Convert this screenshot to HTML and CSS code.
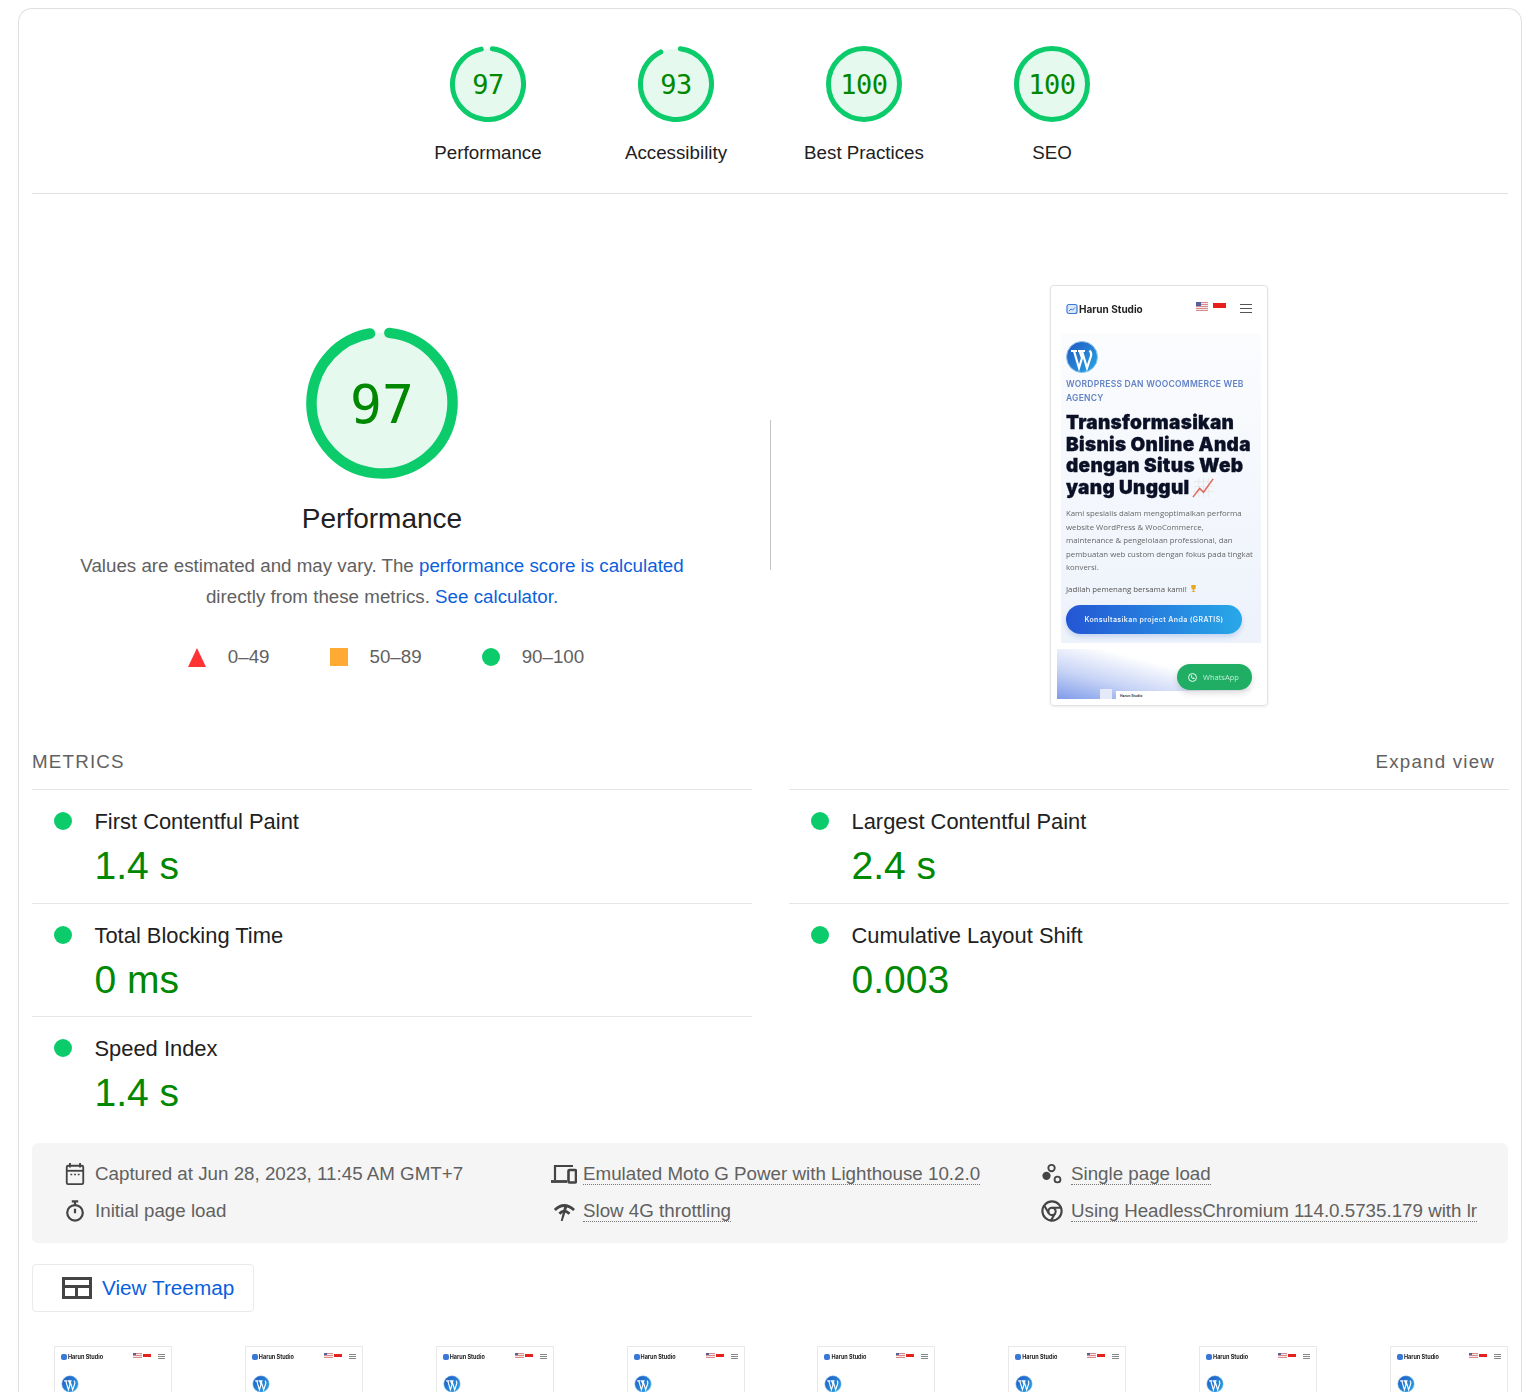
FILE: index.html
```html
<!DOCTYPE html>
<html lang="en">
<head>
  <meta charset="UTF-8" />
  <meta name="viewport" content="width=device-width, initial-scale=1.0"/>
  <title>PageSpeed Report</title>
  <link rel="stylesheet" href="styles.css">
</head>
<body>

<div class="report">

  <!-- Score gauges -->
  <div class="gauges">
    <div class="gauge">
      <div class="ring">
        <svg viewBox="0 0 76 76"><circle class="ring-bg" cx="38" cy="38" r="35.5"/><circle class="ring-arc" cx="38" cy="38" r="35.5" pathLength="100" stroke-dasharray="95 5" transform="rotate(-83 38 38)"/></svg>
        <span>97</span>
      </div>
      <div class="gauge-label">Performance</div>
    </div>
    <div class="gauge">
      <div class="ring">
        <svg viewBox="0 0 76 76"><circle class="ring-bg" cx="38" cy="38" r="35.5"/><circle class="ring-arc" cx="38" cy="38" r="35.5" pathLength="100" stroke-dasharray="91 9" transform="rotate(-83 38 38)"/></svg>
        <span>93</span>
      </div>
      <div class="gauge-label">Accessibility</div>
    </div>
    <div class="gauge">
      <div class="ring">
        <svg viewBox="0 0 76 76"><circle class="ring-bg" cx="38" cy="38" r="35.5"/><circle class="ring-arc" cx="38" cy="38" r="35.5"/></svg>
        <span>100</span>
      </div>
      <div class="gauge-label">Best Practices</div>
    </div>
    <div class="gauge">
      <div class="ring">
        <svg viewBox="0 0 76 76"><circle class="ring-bg" cx="38" cy="38" r="35.5"/><circle class="ring-arc" cx="38" cy="38" r="35.5"/></svg>
        <span>100</span>
      </div>
      <div class="gauge-label">SEO</div>
    </div>
  </div>

  <!-- Performance summary -->
  <div class="summary">
    <div class="summary-left">
      <div class="big-ring">
        <svg viewBox="0 0 152 152"><circle class="big-bg" cx="76" cy="76" r="70.5"/><circle class="big-arc" cx="76" cy="76" r="70.5" pathLength="100" stroke-dasharray="95.6 4.4" transform="rotate(-84 76 76)"/></svg>
        <span>97</span>
      </div>
      <h2>Performance</h2>
      <p class="note">Values are estimated and may vary. The <a href="#">performance score is calculated</a> directly from these metrics. <a href="#">See calculator.</a></p>
      <div class="legend">
        <div class="legend-item"><i class="tri"></i>0–49</div>
        <div class="legend-item"><i class="sq"></i>50–89</div>
        <div class="legend-item"><i class="dot"></i>90–100</div>
      </div>
    </div>
    <div class="divider"></div>
    <div class="summary-right">
      <div class="shot">
        <div class="site-head">
          <svg class="site-logo" viewBox="0 0 12 12"><rect x="1" y="1.5" width="10" height="9" rx="2" fill="#dbe8fb" stroke="#3a78d8" stroke-width="1.2"/><path d="M3 8 5 6l1.5 1L9 4.5" fill="none" stroke="#3a78d8" stroke-width="1"/></svg>
          <b>Harun Studio</b>
          <i class="flag-us"></i>
          <i class="flag-id"></i>
          <i class="burger"></i>
        </div>
        <div class="hero">
          <svg class="wp" viewBox="0 0 34 34"><defs><linearGradient id="wpfill" x1="0" y1="0" x2="1" y2="1"><stop offset="0" stop-color="#1f55c0"/><stop offset="1" stop-color="#2aa8e6"/></linearGradient><symbol id="wpmark" viewBox="0 0 34 34"><circle cx="17" cy="17" r="15.5" fill="url(#wpfill)" stroke="#8cc4ea" stroke-width="1"/><path d="M6 11h6M9 11l5 17 3-10-2.500-7M13 11h7M17 11l5 17 4-12c.8-2.500 0-4-1.500-5.500" fill="none" stroke="#fff" stroke-width="2.200"/></symbol></defs><use href="#wpmark"/></svg>
          <div class="eyebrow">WORDPRESS DAN WOOCOMMERCE WEB AGENCY</div>
          <h1>Transformasikan Bisnis Online Anda dengan Situs Web yang Unggul <svg class="chart" viewBox="0 0 24 24"><path d="M2 6h20M2 11h20M2 16h20M7 2v20M12 2v20M17 2v20" stroke="#e3e3e3" stroke-width=".8" fill="none"/><path d="M1 22 8 13l4 4L22 3" stroke="#e0685c" stroke-width="1.500" fill="none"/></svg></h1>
          <p class="hero-text">Kami spesialis dalam mengoptimalkan performa<br>website WordPress &amp; WooCommerce,<br>maintenance &amp; pengelolaan professional, dan<br>pembuatan web custom dengan fokus pada tingkat<br>konversi.</p>
          <p class="hero-win">Jadilah pemenang bersama kami! <svg class="cup" viewBox="0 0 10 10"><path d="M2.500 1h5v3a2.500 2.500 0 0 1-5 0zM4.400 6h1.200v2H7v1H3V8h1.400z" fill="#e8a91f"/></svg></p>
          <div class="hero-btn">Konsultasikan project Anda (GRATIS)</div>
        </div>
        <div class="fold">
          <div class="fold-icon"></div>
          <div class="fold-card"><span>Harun Studio</span></div>
        </div>
        <div class="whatsapp">
          <svg viewBox="0 0 12 12"><circle cx="6" cy="6" r="4.300" fill="none" stroke="#fff" stroke-width="1"/><path d="M4.300 3.800c-.5 2 1.600 4.200 3.700 3.800l.2-1-1.200-.5-.5.500c-.6-.3-1-.8-1.200-1.300l.5-.5-.5-1.200z" fill="#fff"/></svg>
          WhatsApp
        </div>
      </div>
    </div>
  </div>

  <!-- Metrics -->
  <div class="metrics-head">
    <span>METRICS</span>
    <span class="expand">Expand view</span>
  </div>
  <div class="metrics">
    <div class="metric"><i class="dot"></i><div><div class="metric-name">First Contentful Paint</div><div class="metric-value">1.4 s</div></div></div>
    <div class="metric"><i class="dot"></i><div><div class="metric-name">Largest Contentful Paint</div><div class="metric-value">2.4 s</div></div></div>
    <div class="metric"><i class="dot"></i><div><div class="metric-name">Total Blocking Time</div><div class="metric-value">0 ms</div></div></div>
    <div class="metric"><i class="dot"></i><div><div class="metric-name">Cumulative Layout Shift</div><div class="metric-value">0.003</div></div></div>
    <div class="metric"><i class="dot"></i><div><div class="metric-name">Speed Index</div><div class="metric-value">1.4 s</div></div></div>
  </div>

  <!-- Run info -->
  <div class="env">
    <div class="env-item">
      <svg viewBox="0 0 24 24"><path d="M6.500 0v5M17.500 0v5" stroke="#444" stroke-width="2"/><rect x="3" y="3" width="18" height="20" rx="1.500" fill="none" stroke="#444" stroke-width="2"/><path d="M3 8.500h18" stroke="#444" stroke-width="2"/><path d="M7 12.500h2M11 12.500h2M15 12.500h2" stroke="#444" stroke-width="1.500"/></svg>
      <span>Captured at Jun 28, 2023, 11:45 AM GMT+7</span>
    </div>
    <div class="env-item env-wide">
      <svg viewBox="0 0 26 22"><path d="M4 17V3h18" fill="none" stroke="#444" stroke-width="2.200"/><path d="M0 18.500h16" stroke="#444" stroke-width="2.800"/><rect x="17.500" y="7" width="7.500" height="12.500" rx="1" fill="none" stroke="#444" stroke-width="2.600"/></svg>
      <span class="dotted">Emulated Moto G Power with Lighthouse 10.2.0</span>
    </div>
    <div class="env-item env-last">
      <svg viewBox="0 0 24 24"><circle cx="11.500" cy="5.500" r="3.500" fill="none" stroke="#444" stroke-width="2"/><circle cx="6" cy="14" r="4.500" fill="#444"/><circle cx="18" cy="18" r="3.200" fill="none" stroke="#444" stroke-width="2"/></svg>
      <span class="dotted">Single page load</span>
    </div>
    <div class="env-item">
      <svg viewBox="0 0 24 24"><circle cx="12" cy="14" r="8.500" fill="none" stroke="#444" stroke-width="2.400"/><path d="M8.500 1.500h7M12 1.500v4M12 9.500v5" stroke="#444" stroke-width="2.400"/></svg>
      <span>Initial page load</span>
    </div>
    <div class="env-item env-wide">
      <svg viewBox="0 0 26 24"><path d="M3 11Q13 1 24 11M8 15Q13 9 19 15" fill="none" stroke="#444" stroke-width="3"/><path d="M13.500 6h3.500L11.500 23H9.500z" fill="#444"/></svg>
      <span class="dotted">Slow 4G throttling</span>
    </div>
    <div class="env-item env-last">
      <svg viewBox="0 0 24 24"><circle cx="12" cy="12" r="10.500" fill="none" stroke="#444" stroke-width="2.300"/><circle cx="12" cy="12.500" r="4" fill="none" stroke="#444" stroke-width="2.300"/><path d="M12 8.500h10M8.500 14.500 3.500 6M15.500 14.500l-5 8.500" stroke="#444" stroke-width="2.300" fill="none"/></svg>
      <span class="dotted">Using HeadlessChromium 114.0.5735.179 with lr</span>
    </div>
  </div>

  <a class="treemap" href="#">
    <svg viewBox="0 0 30 22"><path d="M0 0h30v22H0zM3 3v5h24V3zM3 11v8h10v-8zM16 11v8h11v-8z" fill="#444" fill-rule="evenodd"/></svg>
    View Treemap
  </a>

  <!-- Filmstrip -->
  <div class="strip">
    <div class="thumb"><div class="thumb-head"><i class="thumb-logo"></i><b>Harun Studio</b><i class="flag-us"></i><i class="flag-id"></i><i class="burger"></i></div><svg class="thumb-wp"><use href="#wpmark"/></svg></div>
    <div class="thumb"><div class="thumb-head"><i class="thumb-logo"></i><b>Harun Studio</b><i class="flag-us"></i><i class="flag-id"></i><i class="burger"></i></div><svg class="thumb-wp"><use href="#wpmark"/></svg></div>
    <div class="thumb"><div class="thumb-head"><i class="thumb-logo"></i><b>Harun Studio</b><i class="flag-us"></i><i class="flag-id"></i><i class="burger"></i></div><svg class="thumb-wp"><use href="#wpmark"/></svg></div>
    <div class="thumb"><div class="thumb-head"><i class="thumb-logo"></i><b>Harun Studio</b><i class="flag-us"></i><i class="flag-id"></i><i class="burger"></i></div><svg class="thumb-wp"><use href="#wpmark"/></svg></div>
    <div class="thumb"><div class="thumb-head"><i class="thumb-logo"></i><b>Harun Studio</b><i class="flag-us"></i><i class="flag-id"></i><i class="burger"></i></div><svg class="thumb-wp"><use href="#wpmark"/></svg></div>
    <div class="thumb"><div class="thumb-head"><i class="thumb-logo"></i><b>Harun Studio</b><i class="flag-us"></i><i class="flag-id"></i><i class="burger"></i></div><svg class="thumb-wp"><use href="#wpmark"/></svg></div>
    <div class="thumb"><div class="thumb-head"><i class="thumb-logo"></i><b>Harun Studio</b><i class="flag-us"></i><i class="flag-id"></i><i class="burger"></i></div><svg class="thumb-wp"><use href="#wpmark"/></svg></div>
    <div class="thumb"><div class="thumb-head"><i class="thumb-logo"></i><b>Harun Studio</b><i class="flag-us"></i><i class="flag-id"></i><i class="burger"></i></div><svg class="thumb-wp"><use href="#wpmark"/></svg></div>
  </div>

</div>

</body>
</html>
```

FILE: styles.css
```css
html, body { height: 1392px; overflow: hidden; }
body { margin: 0; background: #fff; font-family: "Liberation Sans", Arial, sans-serif; color: #212121; }
a { color: #0b5fdc; text-decoration: none; }

.report { margin: 8px 8px 0 18px; border: 1px solid #e0e0e0; border-bottom: none; border-radius: 14px 14px 0 0; padding: 0 13px; height: 1384px; box-sizing: border-box; }

/* gauges */
.gauges { display: flex; justify-content: center; padding-top: 37px; height: 185px; box-sizing: border-box; border-bottom: 1px solid #e0e0e0; }
.gauge { width: 188px; display: flex; flex-direction: column; align-items: center; }
.ring { position: relative; width: 76px; height: 76px; }
.ring svg { display: block; width: 76px; height: 76px; }
.ring span { position: absolute; inset: 0; display: flex; align-items: center; justify-content: center; font-family: "DejaVu Sans Mono", monospace; font-size: 27px; letter-spacing: -.5px; color: #008800; }
.ring-bg { fill: #e5f9ef; stroke: none; }
.ring-arc { fill: none; stroke: #0ccb6b; stroke-width: 5; stroke-linecap: round; }
.gauge-label { margin-top: 20px; font-size: 18.75px; line-height: 22px; white-space: nowrap; }

/* summary */
.summary { display: flex; height: 546px; }
.summary-left { width: 700px; margin-right: 38px; padding-top: 133px; display: flex; flex-direction: column; align-items: center; }
.big-ring { position: relative; width: 152px; height: 152px; }
.big-ring svg { display: block; width: 152px; height: 152px; }
.big-ring span { position: absolute; inset: 3px 0 0; display: flex; align-items: center; justify-content: center; font-family: "DejaVu Sans Mono", monospace; font-size: 53px; color: #008800; }
.big-bg { fill: #e5f9ef; stroke: none; }
.big-arc { fill: none; stroke: #0ccb6b; stroke-width: 10.5; stroke-linecap: round; }
.summary-left h2 { margin: 22px 0 0; font-size: 28px; line-height: 36px; font-weight: 400; }
.note { margin: 13px 0 0; width: 640px; text-align: center; font-size: 18.75px; line-height: 31px; color: #616161; }
.legend { margin-top: 34px; padding-left: 8px; display: flex; gap: 60px; font-size: 18.75px; line-height: 22px; color: #616161; }
.legend-item { display: flex; align-items: center; gap: 22px; }
.tri { width: 0; height: 0; border-left: 9.5px solid transparent; border-right: 9.5px solid transparent; border-bottom: 19px solid #ff3333; }
.sq { width: 18px; height: 18px; background: #ffaa33; }
.dot { display: block; flex: none; width: 18px; height: 18px; border-radius: 50%; background: #0ccb6b; }
.divider { width: 1px; height: 150px; margin-top: 226px; background: #c4c4c4; }

/* page screenshot */
.summary-right { flex: 1; padding: 91px 0 0 279px; }
.shot { position: relative; width: 218px; height: 421px; box-sizing: border-box; border: 1px solid #e2e2e2; border-radius: 4px; box-shadow: 0 1px 3px rgba(0,0,0,.08); overflow: hidden; filter: blur(.3px); font-family: "Open Sans", sans-serif; }
.site-head { display: flex; align-items: center; height: 48px; padding: 0 15px 2px; box-sizing: border-box; font-family: Inter, sans-serif; font-size: 10px; color: #222; }
.site-logo { width: 12px; height: 12px; margin-right: 1px; }
.site-head b { font-weight: 700; flex: 1; }
.flag-us { display: block; width: 12px; height: 9px; margin-top: -5px; background: linear-gradient(#56609a, #56609a) 0 0 / 5px 4px no-repeat, repeating-linear-gradient(#d98a8a 0 1px, #f1e8e8 1px 2px); }
.flag-id { display: block; width: 13px; height: 5px; margin: -8px 0 0 5px; background: #e8201c; }
.burger { display: block; width: 12px; height: 9px; margin: -1px 0 0 14px; background: linear-gradient(#555 0 1px, transparent 1px 4px, #555 4px 5px, transparent 5px 8px, #555 8px 9px); }
.hero { margin: 0 6px 0 10px; height: 309px; box-sizing: border-box; padding: 6px 5px 0; background: linear-gradient(#fbfcfe, #edf2fb); }
.wp { display: block; width: 34px; height: 34px; margin-left: -1px; }
.eyebrow { margin-top: 4px; font-family: Inter, sans-serif; font-size: 8.5px; line-height: 13.500px; font-weight: 600; letter-spacing: .25px; color: #6282c6; }
.hero h1 { margin: 7px 0 0; font-family: Inter, sans-serif; font-size: 19px; line-height: 21.500px; font-weight: 900; color: #0a1026; letter-spacing: .3px; -webkit-text-stroke: .3px #0a1026; }
.chart { width: 23px; height: 23px; vertical-align: middle; margin: -6px 0 -4px -2px; }
.hero-text { margin: 9px 0 0; font-size: 7.8px; line-height: 13.500px; color: #666; white-space: nowrap; }
.hero-win { margin: 8px 0 0; font-size: 7.8px; line-height: 13px; color: #555; }
.cup { width: 9px; height: 9px; vertical-align: -1px; }
.hero-btn { margin-top: 9px; width: 176px; height: 29px; border-radius: 15px; background: linear-gradient(90deg, #2456d4, #28a8e8); box-shadow: 0 3px 5px rgba(40,90,200,.2); color: #e8f2ff; font-family: Inter, sans-serif; font-size: 7px; font-weight: 600; letter-spacing: .4px; line-height: 29px; text-align: center; }
.fold { position: relative; margin: 6px 16px 0 6px; height: 50px; overflow: hidden; background: linear-gradient(to top right, #7f9cea 0, #c8d4f6 30%, #fff 62%); }
.fold-icon { position: absolute; left: 43px; bottom: 0; width: 12px; height: 10px; background: #e4eaf8; }
.fold-card { position: absolute; left: 59px; right: 0; bottom: -3px; height: 11px; background: #fff; }
.fold-card span { display: block; font-family: Inter, sans-serif; font-size: 3.500px; font-weight: 700; padding: 3px 0 0 4px; color: #444; }
.whatsapp { position: absolute; left: 126px; top: 378px; width: 75px; height: 26px; border-radius: 13px; background: #1fae64; box-shadow: 0 3px 6px rgba(0,0,0,.15); color: #bfeed6; font-size: 7.500px; display: flex; align-items: center; gap: 5px; padding-left: 10px; box-sizing: border-box; }
.whatsapp svg { width: 11px; height: 11px; }

/* metrics */
.metrics-head { display: flex; justify-content: space-between; align-items: center; height: 49px; padding: 0 13px 6px 0; box-sizing: border-box; font-size: 18.750px; letter-spacing: 1.2px; color: #616161; }
.metrics { display: grid; grid-template-columns: 720px 720px; column-gap: 37px; }
.metric { display: flex; gap: 22.500px; height: 113.500px; box-sizing: border-box; border-top: 1px solid #e6e6e6; padding: 17px 0 0 22px; }
.metric .dot { margin-top: 5px; }
.metric-name { font-size: 21.900px; line-height: 30px; }
.metric-value { margin-top: 7px; font-size: 39px; line-height: 44px; color: #008800; }

/* environment */
.env { margin-top: 13px; height: 100px; border-radius: 6px; background: #f5f5f5; padding: 13px 24px 13px 32px; box-sizing: border-box; display: grid; grid-template-columns: 487px 490px 1fr; grid-template-rows: 37px 37px; font-size: 18.750px; color: #616161; }
.env-item { display: flex; align-items: center; gap: 9px; white-space: nowrap; overflow: hidden; }
.env-item svg { flex: none; width: 22px; height: 22px; }
.env-wide { gap: 6px; }
.env-wide svg { width: 26px; }
.env-last { gap: 8px; }
.dotted { border-bottom: 1px dotted #777; line-height: 20px; }

.treemap { margin-top: 21px; width: 222px; height: 48px; box-sizing: border-box; border: 1px solid #eaeaea; border-radius: 4px; display: flex; align-items: center; gap: 10px; padding-left: 29px; font-size: 20.750px; }
.treemap svg { width: 30px; height: 22px; }

/* filmstrip */
.strip { margin-top: 34px; padding-left: 22px; display: flex; justify-content: space-between; }
.thumb { width: 118px; height: 60px; box-sizing: border-box; border: 1px solid #e8e8e8; padding: 0 6px; filter: blur(.2px); }
.thumb-head { display: flex; align-items: center; height: 20px; font-family: Inter, sans-serif; font-size: 5.500px; }
.thumb-head b { flex: 1; font-weight: 700; }
.thumb-logo { width: 6px; height: 6px; border-radius: 2px; background: #3a78d8; margin-right: 1px; }
.thumb-head .flag-us { width: 9px; height: 5px; margin-top: -2px; background: linear-gradient(#56609a, #56609a) 0 0 / 3px 2px no-repeat, repeating-linear-gradient(#d98a8a 0 1px, #f1e8e8 1px 2px); }
.thumb-head .flag-id { width: 8px; height: 3px; margin: -3px 0 0 1px; }
.thumb-head .burger { width: 7px; height: 5px; margin: 0 0 0 7px; background: linear-gradient(#888 0 1px, transparent 1px 2px, #888 2px 3px, transparent 3px 4px, #888 4px 5px); }
.thumb-wp { display: block; width: 18px; height: 18px; margin-top: 8px; }
```
